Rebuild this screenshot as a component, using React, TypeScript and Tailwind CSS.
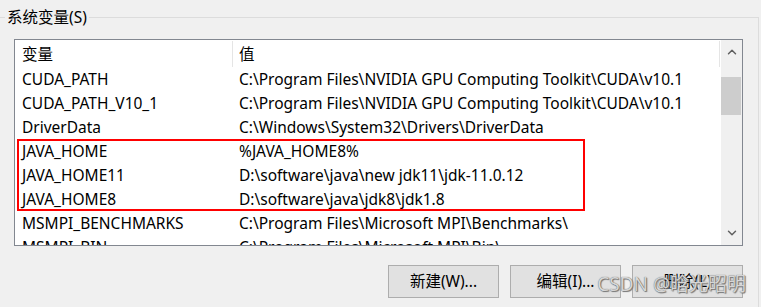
import { ChevronDown, ChevronUp } from "lucide-react";

const rows = [
  { name: "CUDA_PATH", value: "C:\\Program Files\\NVIDIA GPU Computing Toolkit\\CUDA\\v10.1" },
  { name: "CUDA_PATH_V10_1", value: "C:\\Program Files\\NVIDIA GPU Computing Toolkit\\CUDA\\v10.1" },
  { name: "DriverData", value: "C:\\Windows\\System32\\Drivers\\DriverData" },
];

const javaRows = [
  { name: "JAVA_HOME", value: "%JAVA_HOME8%" },
  { name: "JAVA_HOME11", value: "D:\\software\\java\\new jdk11\\jdk-11.0.12" },
  { name: "JAVA_HOME8", value: "D:\\software\\java\\jdk8\\jdk1.8" },
];

const tailRows = [
  { name: "MSMPI_BENCHMARKS", value: "C:\\Program Files\\Microsoft MPI\\Benchmarks\\" },
  { name: "MSMPI_BIN", value: "C:\\Program Files\\Microsoft MPI\\Bin\\" },
];

function Row({ name, value }: { name: string; value: string }) {
  return (
    <div className="flex h-[24px] items-center whitespace-nowrap leading-[24px]">
      <div className="w-[218px] shrink-0 pl-[7px]">{name}</div>
      <div className="pl-[6px]">{value}</div>
    </div>
  );
}

function Button({ label }: { label: string }) {
  return (
    <button className="flex h-[33px] w-[111px] items-center justify-center border border-[#adadad] bg-[#e1e1e1] text-[15.5px] text-black">
      {label}
    </button>
  );
}

export default function App() {
  return (
    <div className="relative h-[307px] w-[761px] overflow-hidden bg-[#f0f0f0] font-['Noto_Sans','Noto_Sans_CJK_SC',sans-serif] text-[15.5px] text-black">
      <fieldset className="mt-[7px] h-[330px] w-[759px] border-t border-r border-[#dcdcdc]">
        <legend className="ml-[5px] px-[2px] leading-[20px]">系统变量(S)</legend>

        <div className="pl-[14px] pt-[12px]">
          {/* list view */}
          <div className="flex h-[207px] w-[729px] border border-[#828790] bg-white">
            <div className="flex-1 overflow-hidden">
              <div className="flex h-[27px] items-center">
                <div className="h-[26px] w-[218px] shrink-0 border-r border-[#e5e5e5] pl-[7px] pt-[3px] leading-[20px]">变量</div>
                <div className="h-[26px] flex-1 border-r border-[#e5e5e5] pl-[6px] pt-[3px] leading-[20px]">值</div>
                <div className="w-px" />
              </div>
              {rows.map((r) => (
                <Row key={r.name} {...r} />
              ))}
              <div className="relative">
                {javaRows.map((r) => (
                  <Row key={r.name} {...r} />
                ))}
                <div className="pointer-events-none absolute top-0 bottom-0 left-[2px] w-[568px] border-2 border-[#ff0000]" />
              </div>
              {tailRows.map((r) => (
                <Row key={r.name} {...r} />
              ))}
            </div>

            {/* scrollbar */}
            <div className="flex w-[21px] shrink-0 flex-col bg-[#f0f0f0]">
              <div className="flex h-[24px] items-center justify-center text-[#606060]">
                <ChevronUp size={14} strokeWidth={2.5} />
              </div>
              <div className="mt-[13px] h-[38px] w-[20px] bg-[#cdcdcd]" />
              <div className="flex-1" />
              <div className="flex h-[24px] items-center justify-center text-[#606060]">
                <ChevronDown size={14} strokeWidth={2.5} />
              </div>
            </div>
          </div>

          <div className="mt-[19px] flex w-[729px] justify-end gap-[11px]">
            <Button label="新建(W)..." />
            <Button label="编辑(I)..." />
            <Button label="删除(L)" />
          </div>
        </div>
      </fieldset>

      <div className="absolute right-[15px] bottom-[11px] text-[19px] leading-[24px] text-[#d6d6d6] [text-shadow:0_0_1px_#555,1px_1px_1px_#777]">
        CSDN @晗光昭明
      </div>
    </div>
  );
}
